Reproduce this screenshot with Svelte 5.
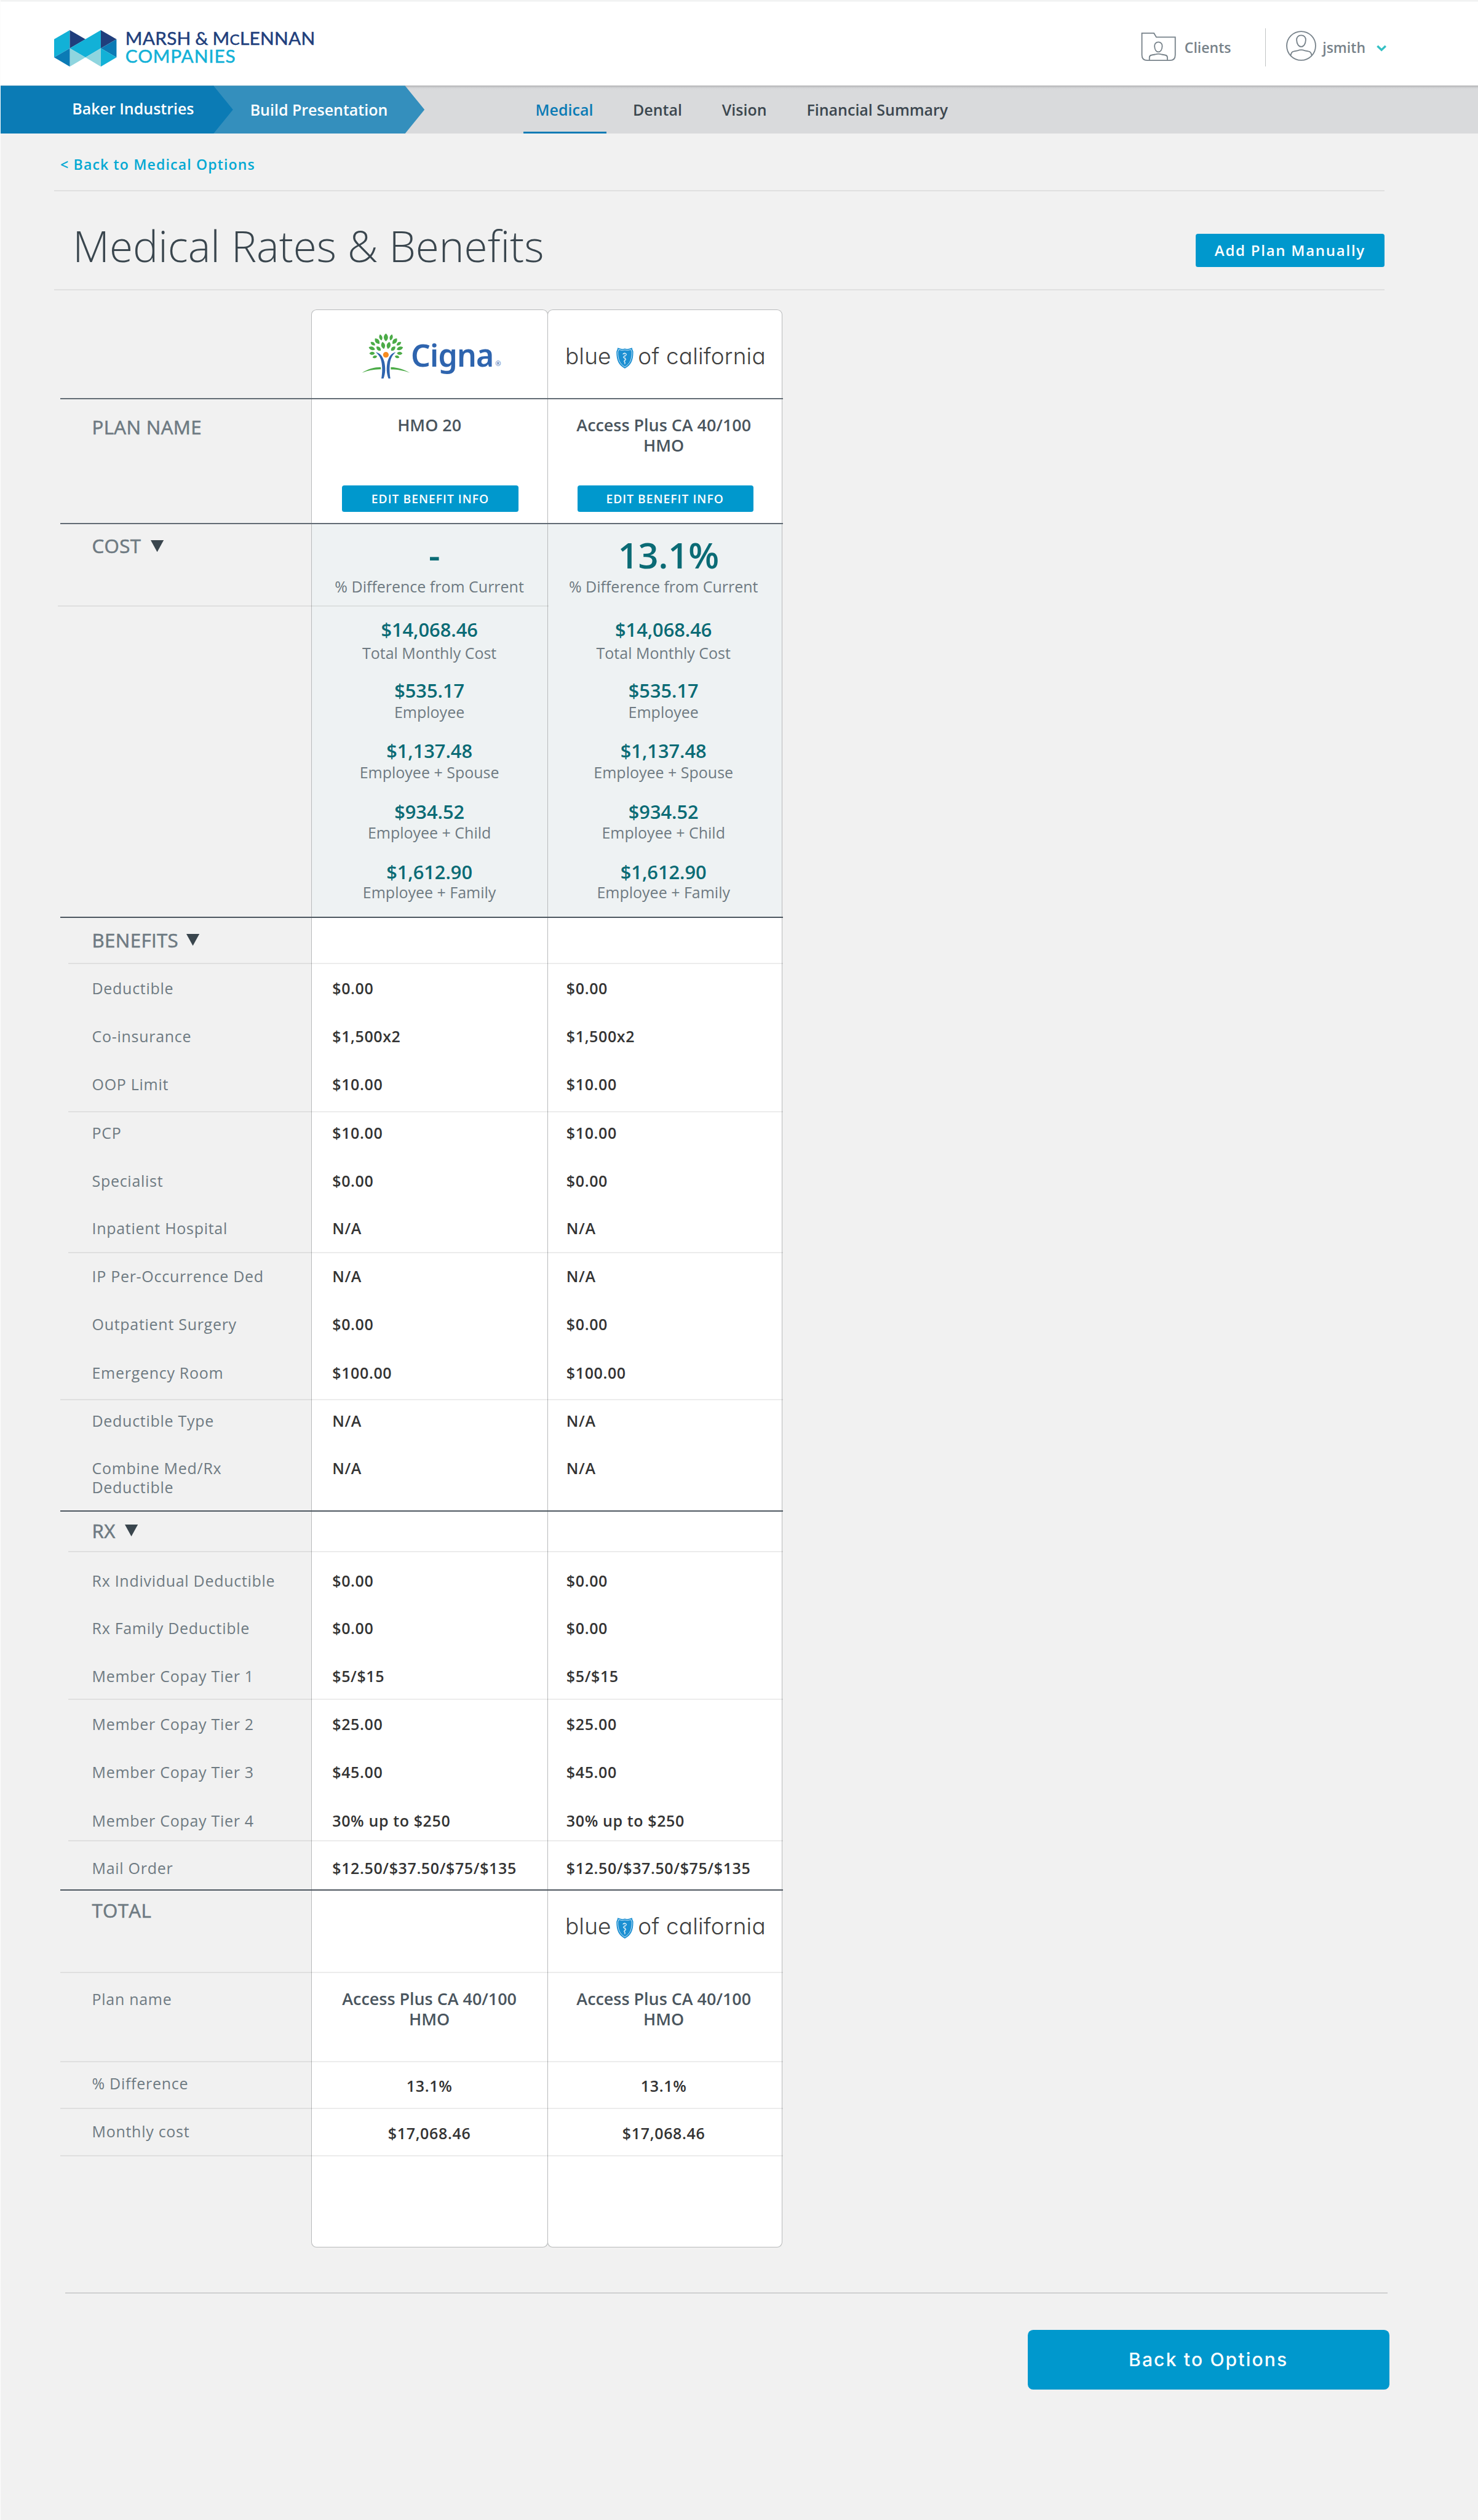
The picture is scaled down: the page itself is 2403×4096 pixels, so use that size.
<script lang="ts">
  type Row = { label: string; value: string; h: number; pad: number; rule?: 'soft' | 'wide' };

  const tabs = ['Medical', 'Dental', 'Vision', 'Financial Summary'];

  const costs = [
    { amount: '$14,068.46', label: 'Total Monthly Cost', lead: 4.34 },
    { amount: '$535.17', label: 'Employee', lead: 3.86 },
    { amount: '$1,137.48', label: 'Employee + Spouse', lead: 3.6 },
    { amount: '$934.52', label: 'Employee + Child', lead: 3.58 },
    { amount: '$1,612.90', label: 'Employee + Family', lead: 3.26 }
  ];

  // Row heights and top padding are in rem.
  const benefits: Row[] = [
    { label: 'Deductible', value: '$0.00', h: 8.1, pad: 2.44 },
    { label: 'Co-insurance', value: '$1,500x2', h: 8.1, pad: 2.44 },
    { label: 'OOP Limit', value: '$10.00', h: 8.9, pad: 2.44, rule: 'soft' },
    { label: 'PCP', value: '$10.00', h: 7.4, pad: 1.75 },
    { label: 'Specialist', value: '$0.00', h: 8.1, pad: 2.45 },
    { label: 'Inpatient Hospital', value: 'N/A', h: 8.34, pad: 2.45, rule: 'soft' },
    { label: 'IP Per-Occurrence Ded', value: 'N/A', h: 7.9, pad: 2.21 },
    { label: 'Outpatient Surgery', value: '$0.00', h: 8.1, pad: 2.41 },
    { label: 'Emergency Room', value: '$100.00', h: 8.84, pad: 2.51, rule: 'wide' },
    { label: 'Deductible Type', value: 'N/A', h: 7.42, pad: 1.79 },
    { label: 'Combine Med/Rx Deductible', value: 'N/A', h: 11.4, pad: 2.39 }
  ];

  const rx: Row[] = [
    { label: 'Rx Individual Deductible', value: '$0.00', h: 8.8, pad: 3.09 },
    { label: 'Rx Family Deductible', value: '$0.00', h: 8.1, pad: 2.39 },
    { label: 'Member Copay Tier 1', value: '$5/$15', h: 8.1, pad: 2.39, rule: 'soft' },
    { label: 'Member Copay Tier 2', value: '$25.00', h: 8.1, pad: 2.39 },
    { label: 'Member Copay Tier 3', value: '$45.00', h: 8.1, pad: 2.39 },
    { label: 'Member Copay Tier 4', value: '30% up to $250', h: 7.7, pad: 2.47, rule: 'soft' },
    { label: 'Mail Order', value: '$12.50/$37.50/$75/$135', h: 8.35, pad: 2.86 }
  ];

  // x, y, half width, half height, rotation
  const leaves = [
    [143, 163, 11, 20, 0], [117, 163, 8, 16, -15], [170, 163, 8, 16, 15],
    [99, 182, 10, 18, -38], [188, 182, 10, 18, 38], [77, 195, 8, 14, -55],
    [209, 195, 8, 14, 55], [129, 204, 10, 18, -12], [157, 204, 10, 18, 12],
    [106, 220, 9, 15, -45], [180, 220, 9, 15, 45], [72, 219, 9, 17, -72],
    [214, 219, 9, 17, 72], [73, 244, 8, 14, -92], [213, 244, 8, 14, 92],
    [87, 262, 7, 12, -105], [200, 262, 7, 12, 105]
  ];
</script>

{#snippet blueLogo()}
  <div class="blue-logo">
    <span>blue</span>
    <svg class="shield" viewBox="1314 216 88 108" aria-hidden="true">
      <path d="M1321 217Q1340 226 1358 221Q1376 226 1395 217Q1396 226 1401 236C1402 278 1391 306 1358 323C1325 306 1314 278 1315 236Q1320 226 1321 217Z" fill="#1b8fd2" />
      <path d="M1326 226Q1343 232 1358 228Q1373 232 1390 226Q1391 232 1394 238C1394 275 1385 300 1358 315C1331 300 1322 275 1322 238Q1325 232 1326 226Z" fill="none" stroke="#fff" stroke-width="2.4" />
      <path d="M1348 251Q1350 244 1358 245Q1368 247 1365 254Q1361 259 1354 260Q1347 265 1354 269Q1365 272 1362 279Q1352 283 1355 289Q1361 292 1357 299" fill="none" stroke="#fff" stroke-width="3.4" />
      <path d="M1358 241V302" fill="none" stroke="#fff" stroke-width="1.6" />
    </svg>
    <span class="state">of california</span>
  </div>
{/snippet}

{#snippet arrow()}
  <svg class="arrow" viewBox="0 0 22 20" preserveAspectRatio="none" aria-hidden="true"><path d="M0 0H22L11 20Z" fill="#39454d" /></svg>
{/snippet}

{#snippet dataRows(rows: Row[])}
  {#each rows as r, i}
    <div class="row {r.rule ?? ''}" class:strong={i === rows.length - 1} style="--h:{r.h}rem;--pad:{r.pad}rem">
      <div class="label">{r.label}</div>
      <div class="cell value">{r.value}</div>
      <div class="cell second value">{r.value}</div>
    </div>
  {/each}
{/snippet}

<div class="page">
  <header>
    <div class="brand">
      <svg class="mark" viewBox="180 153 207 185" preserveAspectRatio="none" aria-hidden="true">
        <path fill="#12b1d7" d="M232 153L180 199V291L232 245Z" />
        <path fill="#203e7c" d="M232 153L284 199L232 245Z" />
        <path fill="#12b1d7" d="M335 153L232 245L284 291L335 245Z" />
        <path fill="#203e7c" d="M335 153L387 199L335 245Z" />
        <path fill="#0b7bb5" d="M387 199V291L335 245Z" />
        <path fill="#12b1d7" d="M335 245L387 291L335 338Z" />
        <path fill="#8fd5df" d="M335 245V338L284 291ZM232 245L284 291L232 338Z" />
        <path fill="#0b7bb5" d="M232 245L180 291L232 338Z" />
      </svg>
      <div class="wordmark">
        <div class="marsh">MARSH &amp; M<span class="small-c">C</span>LENNAN</div>
        <div class="companies">COMPANIES</div>
      </div>
    </div>
    <svg class="folder" viewBox="0 0 60 50" aria-hidden="true">
      <g fill="none" stroke="#77828a" stroke-width="1.9">
        <path d="M1.6 2H22L26 8.8H58V39Q58 48 49 48H11Q1.6 48 1.6 39Z" />
        <path d="M29.5 17C33.5 17 36.3 20 36 24C35.7 30 33 33.7 29.5 33.7C26 33.7 23.3 30 23 24C22.7 20 25.5 17 29.5 17Z" />
        <path d="M14.3 47.5V43Q14.5 39.5 18 39L24 38Q29.5 36 35 38L41 39Q44.5 39.5 44.7 43V47.5" />
      </g>
    </svg>
    <span class="head-text clients">Clients</span>
    <div class="divider"></div>
    <svg class="avatar" viewBox="0 0 51 51" aria-hidden="true">
      <g fill="none" stroke="#77828a" stroke-width="1.9">
        <circle cx="25.5" cy="25.5" r="24.4" />
        <path d="M25.5 7.7C30.5 7.7 33.5 11 33.2 15.5C32.9 22 30 27 25.5 27C21 27 18.1 22 17.8 15.5C17.5 11 20.5 7.7 25.5 7.7Z" />
        <path d="M7.8 42Q8.5 35.5 13.5 34.8L19 33.8Q25.5 31 32 33.8L37.5 34.8Q42.5 35.5 43.4 42" />
      </g>
    </svg>
    <span class="head-text">jsmith</span>
    <svg class="chevron" viewBox="0 0 17 11" aria-hidden="true"><path d="M1.5 1.8L8.5 8.5L15.5 1.8" fill="none" stroke="#34c0c4" stroke-width="3.6" /></svg>
  </header>

  <nav>
    <div class="crumb first">Baker Industries</div>
    <div class="crumb current">Build Presentation</div>
    <div class="tabs">
      {#each tabs as tab, i}
        <div class="tab" class:active={i === 0}>{tab}</div>
      {/each}
    </div>
  </nav>

  <div class="back">&lt; Back to Medical Options</div>

  <div class="title-bar">
    <h1>Medical Rates &amp; Benefits</h1>
    <button class="add">Add Plan Manually</button>
  </div>

  <main>
    <div class="row top strong heavy" style="--h:15.25rem;--pad:0rem">
      <div></div>
      <div class="cell">
        <div class="cigna">
          <svg viewBox="20 140 250 235" aria-hidden="true">
            {#each leaves as [x, y, rx, ry, rot]}
              <path fill="#4bab47" transform="translate({x} {y}) rotate({rot}) scale({rx} {ry})" d="M0-1C1.3-.4 1.3.4 0 1C-1.3.4-1.3-.4 0-1Z" />
            {/each}
            <circle cx="143" cy="251.5" r="14.5" fill="#f68b1f" />
            <path fill="#2e64ae" d="M91 238C111 240 128 258 135 287C142 318 141 345 131 372H120C126 340 126 300 117 274C111 257 102 247 91 238ZM193 238C174 240 159 258 151 287C145 318 146 345 156 372H166C160 340 160 300 168 274C174 257 182 247 193 238Z" />
            <path fill="#4bab47" d="M22 343C50 323 85 314 117 314L118 325C85 324 52 331 22 343ZM168 314C205 316 235 325 264 343C235 332 205 326 168 326Z" />
          </svg>
          <span class="name">Cigna</span><span class="reg">®</span>
        </div>
      </div>
      <div class="cell second">{@render blueLogo()}</div>
    </div>

    <div class="row strong heavy plan" style="--h:21.1rem;--pad:2.84rem">
      <div class="label section">PLAN NAME</div>
      <div class="cell"><div class="plan-name">HMO 20</div><button class="edit">EDIT BENEFIT INFO</button></div>
      <div class="cell second"><div class="plan-name">Access Plus CA 40/100 HMO</div><button class="edit">EDIT BENEFIT INFO</button></div>
    </div>

    <div class="row cost partial" style="--h:13.9rem;--pad:1.76rem">
      <div class="label section">COST {@render arrow()}</div>
      <div class="cell"><div class="diff">-</div><div class="caption">% Difference from Current</div></div>
      <div class="cell second"><div class="diff">13.1%</div><div class="caption">% Difference from Current</div></div>
    </div>

    <div class="row cost strong" style="--h:52.7rem;--pad:0rem">
      <div></div>
      {#each [0, 1] as col}
        <div class="cell list" class:second={col === 1}>
          {#each costs as c}
            <div class="cost-item" style="--lead:{c.lead}rem">
              <div class="amount">{c.amount}</div>
              <div class="caption">{c.label}</div>
            </div>
          {/each}
        </div>
      {/each}
    </div>

    <div class="row soft" style="--h:7.75rem;--pad:1.83rem">
      <div class="label section benefits">BENEFITS {@render arrow()}</div>
      <div class="cell"></div>
      <div class="cell second"></div>
    </div>
    {@render dataRows(benefits)}

    <div class="row soft" style="--h:6.9rem;--pad:1.36rem">
      <div class="label section">RX {@render arrow()}</div>
      <div class="cell"></div>
      <div class="cell second"></div>
    </div>
    {@render dataRows(rx)}

    <div class="row wide" style="--h:13.95rem;--pad:1.46rem">
      <div class="label section">TOTAL</div>
      <div class="cell"></div>
      <div class="cell second total-logo">{@render blueLogo()}</div>
    </div>
    <div class="row wide" style="--h:15.1rem;--pad:2.73rem">
      <div class="label">Plan name</div>
      <div class="cell"><div class="plan-name">Access Plus CA 40/100 HMO</div></div>
      <div class="cell second"><div class="plan-name">Access Plus CA 40/100 HMO</div></div>
    </div>
    <div class="row wide" style="--h:7.9rem;--pad:1.89rem">
      <div class="label">% Difference</div>
      <div class="cell centered">13.1%</div>
      <div class="cell second centered">13.1%</div>
    </div>
    <div class="row wide" style="--h:8rem;--pad:2.09rem">
      <div class="label">Monthly cost</div>
      <div class="cell centered">$17,068.46</div>
      <div class="cell second centered">$17,068.46</div>
    </div>
    <div class="row bottom" style="--h:15.4rem;--pad:0rem">
      <div></div>
      <div class="cell"></div>
      <div class="cell second"></div>
    </div>
  </main>

  <footer>
    <button class="options">Back to Options</button>
  </footer>
</div>

<style>
  :global(html) { font-size: 9.612px; }
  :global(body) { margin: 0; background: #f1f1f1; }
  .page {
    box-sizing: border-box;
    width: 250rem;
    height: 426.1rem;
    overflow: hidden;
    border-left: 1px solid #fcfcfc;
    background: #f1f1f1;
    font-family: 'Open Sans', 'Noto Sans', sans-serif;
    color: #333;
  }
  .page * { box-sizing: border-box; }
  button { display: block; border: 0; padding: 0; margin: 0; background: #0098cd; color: #fff; font-family: inherit; font-weight: 600; white-space: nowrap; text-align: center; }
  svg { display: block; }

  header {
    display: grid;
    grid-template-columns: 192.9rem 7.35rem 13.7rem 3.5rem 6.15rem 9.15rem 1.7rem;
    height: 14.5rem;
    background: linear-gradient(#fff 1px, #e0e2e2 1px, #e0e2e2 2px, #fff 2px);
    align-items: start;
  }
  .brand { display: flex; padding: 5.1rem 0 0 9.1rem; }
  .mark { width: 10.55rem; height: 6.17rem; }
  .wordmark { margin: -0.15rem 0 0 1.45rem; font-family: Lato, sans-serif; font-size: 3.1rem; line-height: 2.88rem; white-space: nowrap; }
  .marsh { color: #203e7c; -webkit-text-stroke: 0.5px #203e7c; letter-spacing: 0.03rem; word-spacing: -0.12rem; }
  .companies { color: #12b1d7; -webkit-text-stroke: 0.5px #12b1d7; letter-spacing: 0.09rem; }
  .small-c { font-size: 2.5rem; }
  .folder { width: 6rem; height: 5rem; margin-top: 5.4rem; }
  .avatar { width: 5.1rem; height: 5.1rem; margin-top: 5.25rem; }
  .head-text { margin-top: 6.42rem; font-size: 2.4rem; line-height: 3.2rem; font-weight: 600; color: #77828a; }
  .divider { width: 1px; height: 6.45rem; margin-top: 4.8rem; background: #c0c3c4; }
  .chevron { width: 1.7rem; height: 1.1rem; margin-top: 7.6rem; }

  nav {
    display: flex;
    height: 8.1rem;
    background: linear-gradient(#b2b3b5 1px, #c1c2c4 1px, #c3c4c6 0.32rem, #d3d4d6 0.34rem, #d9dadc 0.7rem);
    font-size: 2.6rem;
    font-weight: 600;
    white-space: nowrap;
  }
  .crumb { height: 8.1rem; color: #fff; clip-path: polygon(0 0, calc(100% - 3.3rem) 0, 100% 50%, calc(100% - 3.3rem) 100%, 0 100%); }
  .first { position: relative; z-index: 1; width: 39.3rem; padding-left: 12.1rem; line-height: 7.85rem; background: #0b7bb5; }
  .current { width: 35.8rem; margin-left: -3.4rem; padding-left: 6.3rem; line-height: 8.14rem; background: #348fbd; }
  .tabs { display: flex; margin-left: 16.75rem; line-height: 8.2rem; color: #3c474f; }
  .tab { margin-right: 6.75rem; }
  .active { width: 14rem; margin-right: 4.5rem; text-align: center; text-indent: -0.2rem; border-bottom: 0.4rem solid #0b7bb5; color: #0b7bb5; }

  .back { height: 9.5rem; padding: 3.6rem 0 0 10.1rem; font-size: 2.4rem; line-height: 3.2rem; font-weight: 600; letter-spacing: 0.12rem; color: #05a9d3; }
  .title-bar { display: flex; justify-content: space-between; width: 225.1rem; height: 17rem; margin-left: 9rem; border-top: 2px solid #e0e0e0; border-bottom: 2px solid #e0e0e0; }
  h1 { margin: 5.24rem 0 0 3.2rem; font-size: 7.2rem; line-height: 8rem; font-weight: 300; color: #3a464e; }
  .add { width: 32rem; height: 5.65rem; margin-top: 7.2rem; border-radius: 0.4rem; font-size: 2.5rem; line-height: 5.7rem; letter-spacing: 0.18rem; }

  main { width: 122.2rem; margin: 3.2rem 0 0 10.1rem; }
  .row { position: relative; display: grid; grid-template-columns: 42.4rem 40.05rem 39.65rem; height: var(--h); }
  .row::after { content: ''; position: absolute; left: 0; right: 0; bottom: 0; height: 2px; }
  .soft::after, .wide::after, .partial::after { background: rgba(0, 0, 0, 0.075); }
  .soft::after { left: 1.3rem; }
  .partial::after { left: -0.4rem; right: 39.65rem; }
  .strong::after { background: #4c565f; }
  .heavy::after { background: #626b74; }
  .cell { border-left: 1px solid #b8babb; border-right: 1px solid #b8babb; background: #fff; }
  .second { margin-left: -1px; }
  .top .cell { border-top: 1px solid #b8babb; border-radius: 0.9rem 0.9rem 0 0; }
  .bottom .cell { border-bottom: 1px solid #b8babb; border-radius: 0 0 0.9rem 0.9rem; }
  .cost .cell { background: #eef2f3; }

  .label { padding: calc(var(--pad) + 0.1rem) 7rem 0 5.35rem; font-size: 2.6rem; line-height: 3.2rem; letter-spacing: 0.075rem; color: #6e7a82; white-space: nowrap; }
  .value { padding: calc(var(--pad) + 0.1rem) 0 0 3.5rem; font-size: 2.6rem; line-height: 3.2rem; font-weight: 600; letter-spacing: 0.065rem; white-space: nowrap; }
  .row:not(.plan) > .label:not(.section) { white-space: normal; margin-right: -1.5rem; padding-right: 5rem; }
  .second.value { padding-left: 3.15rem; }
  .section { display: flex; align-items: center; align-self: start; gap: 1.6rem; font-size: 3.25rem; line-height: 3.6rem; font-weight: 400; letter-spacing: 0.04rem; -webkit-text-stroke: 0.6px #6e7a82; }
  .benefits { gap: 1.3rem; }
  .arrow { width: 2.2rem; height: 2rem; }

  .cigna { display: flex; padding: 3.85rem 0 0 8.45rem; }
  .cigna svg { width: 8.33rem; height: 7.83rem; }
  .cigna .name { margin-top: 0.85rem; font: 600 5.2rem/6rem 'Noto Sans', sans-serif; letter-spacing: -0.08rem; color: #2e64ae; }
  .cigna .reg { margin: 4.6rem 0 0 0.3rem; font-size: 1.15rem; line-height: 1.2rem; color: #2e64ae; }
  .blue-logo { display: flex; padding: 5.85rem 0 0 2.95rem; font-family: Inter, sans-serif; font-weight: 300; font-size: 3.84rem; line-height: 4rem; font-feature-settings: 'cv11'; letter-spacing: 0.02rem; color: #3f3f40; white-space: nowrap; }
  .total-logo .blue-logo { padding-top: 4.05rem; }
  .shield { width: 2.9rem; height: 3.56rem; margin: 0.5rem 0.75rem 0 0.9rem; }

  .plan-name { padding: 2.72rem 4.5rem 0; font-size: 2.8rem; line-height: 3.4rem; font-weight: 600; text-align: center; color: #4a555e; }
  .second .plan-name { padding-right: 4.8rem; padding-left: 4.5rem; }
  .plan .plan-name { height: 14.5rem; }
  .edit { position: relative; left: 0.15rem; width: 29.8rem; height: 4.5rem; margin: 0 auto; border-radius: 0.4rem; font-size: 2rem; line-height: 4.65rem; letter-spacing: 0.107rem; }
  .plan .second .edit { text-indent: -0.2rem; }
  .diff { padding: 1.37rem 0 0 1.7rem; font-size: 6rem; line-height: 7.8rem; font-weight: 600; text-align: center; color: #0a6b75; }
  .second .diff { padding-left: 1.3rem; }
  .caption { font-size: 2.6rem; line-height: 2.9rem; text-align: center; color: #6e7a82; white-space: nowrap; }
  .second .caption, .second .amount { padding-right: 0.4rem; }
  .list { padding-top: 2.12rem; }
  .cost-item { height: 10.25rem; }
  .cost-item .caption { line-height: var(--lead); }
  .amount { font-size: 3.2rem; line-height: 3.6rem; font-weight: 600; text-align: center; color: #0a6b75; }
  .centered { padding-top: calc(var(--pad) + 0.42rem); font-size: 2.6rem; line-height: 3.2rem; font-weight: 600; letter-spacing: 0.07rem; text-align: center; }
  .second.centered { padding-right: 0.3rem; }

  footer { display: flex; justify-content: flex-end; width: 223.7rem; margin: 7.6rem 0 0 10.9rem; padding-top: 6.1rem; border-top: 2px solid #cfd0d1; }
  .options { flex: none; width: 61.2rem; height: 10.1rem; margin-right: -0.3rem; border-radius: 0.9rem; font-family: Inter, sans-serif; font-size: 3.12rem; line-height: 9.65rem; font-weight: 500; letter-spacing: 0.23rem; }
</style>
